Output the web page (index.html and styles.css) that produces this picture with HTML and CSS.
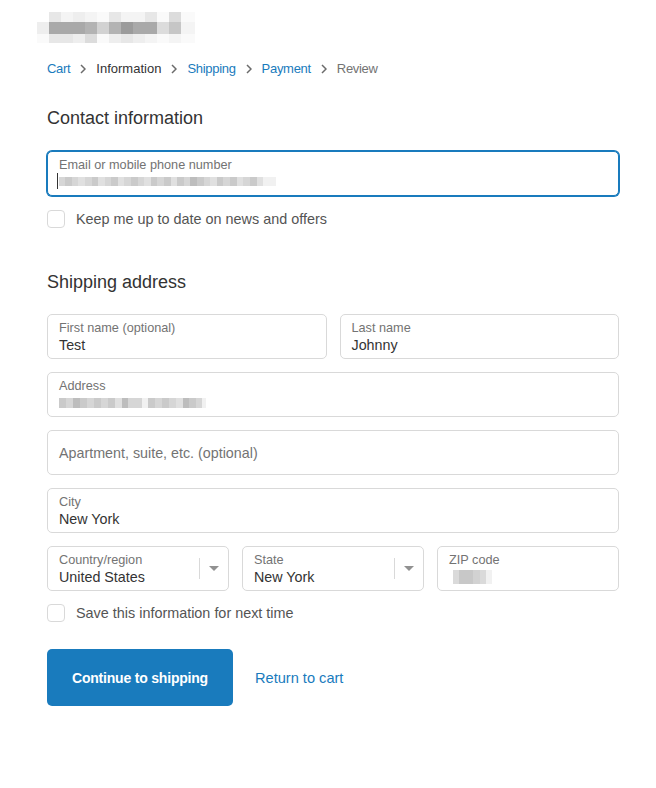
FILE: index.html
```html
<!DOCTYPE html>
<html lang="en">
<head>
<meta charset="utf-8">
<title>Information - Checkout</title>
<link rel="stylesheet" href="styles.css">
</head>
<body>
<main class="page">
  <div class="logo" aria-label="Store logo">
    <div class="pxrow r1">
      <i class="s0"></i><i class="s3"></i><i class="s1"></i><i class="s2"></i><i class="s1"></i><i class="s0b"></i><i class="s3"></i><i class="s1"></i><i class="s1"></i><i class="s3"></i><i class="s0b"></i><i class="s4"></i><i class="s0b"></i>
    </div>
    <div class="pxrow r2">
      <i class="s2"></i><i class="d2"></i><i class="d2"></i><i class="d2"></i><i class="d3"></i><i class="d5"></i><i class="d3"></i><i class="d1"></i><i class="d2"></i><i class="d2"></i><i class="s4"></i><i class="d4"></i><i class="s1"></i>
    </div>
    <div class="pxrow r3">
      <i class="s0b"></i><i class="s3"></i><i class="s3"></i><i class="s2"></i><i class="s4"></i><i class="s0b"></i><i class="s2"></i><i class="s3"></i><i class="s2"></i><i class="s1"></i><i class="s0b"></i><i class="s1"></i><i class="s0b"></i>
    </div>
  </div>

  <nav class="crumbs">
    <a class="crumb link">Cart</a>
    <svg class="chev" viewBox="0 0 6 10"><path d="M1 1l4 4-4 4"/></svg>
    <span class="crumb current">Information</span>
    <svg class="chev" viewBox="0 0 6 10"><path d="M1 1l4 4-4 4"/></svg>
    <a class="crumb link">Shipping</a>
    <svg class="chev" viewBox="0 0 6 10"><path d="M1 1l4 4-4 4"/></svg>
    <a class="crumb link">Payment</a>
    <svg class="chev" viewBox="0 0 6 10"><path d="M1 1l4 4-4 4"/></svg>
    <span class="crumb muted">Review</span>
  </nav>

  <h2 class="section-title">Contact information</h2>
  <div class="field focused">
    <span class="label">Email or mobile phone number</span>
    <span class="value blurred email-blur"><span class="caret"></span><i class="b1 w6"></i><i class="b2 w7"></i><i class="b1 w6"></i><i class="b3 w7"></i><i class="b1 w7"></i><i class="b2 w6"></i><i class="b3 w7"></i><i class="b1 w6"></i><i class="b2 w7"></i><i class="b3 w6"></i><i class="b1 w7"></i><i class="b2 w7"></i><i class="b1 w6"></i><i class="b3 w7"></i><i class="b2 w6"></i><i class="b1 w7"></i><i class="b2 w7"></i><i class="b3 w6"></i><i class="b2 w7"></i><i class="b1 w6"></i><i class="b4 w7"></i><i class="b2 w7"></i><i class="b1 w6"></i><i class="b3 w7"></i><i class="b2 w6"></i><i class="b1 w7"></i><i class="b2 w7"></i><i class="b3 w6"></i><i class="b1 w7"></i><i class="b2 w7"></i><i class="b3 w6"></i><i class="b5 w7"></i><i class="b5 w6"></i></span>
  </div>
  <label class="check">
    <span class="box"></span>
    <span class="check-text">Keep me up to date on news and offers</span>
  </label>

  <h2 class="section-title second">Shipping address</h2>
  <div class="fields">
    <div class="row two">
      <div class="field">
        <span class="label">First name (optional)</span>
        <span class="value">Test</span>
      </div>
      <div class="field">
        <span class="label">Last name</span>
        <span class="value">Johnny</span>
      </div>
    </div>
    <div class="field">
      <span class="label">Address</span>
      <span class="value blurred addr-blur"><i class="b2 w7"></i><i class="b1 w7"></i><i class="b4 w7"></i><i class="b2 w7"></i><i class="b1 w7"></i><i class="b2 w7"></i><i class="b1 w7"></i><i class="b2 w7"></i><i class="b3 w7"></i><i class="b4 w6"></i><i class="b1 w7"></i><i class="b1 w7"></i><i class="b5 w6"></i><i class="b2 w7"></i><i class="b1 w7"></i><i class="b2 w7"></i><i class="b1 w7"></i><i class="b3 w7"></i><i class="b4 w6"></i><i class="b2 w7"></i><i class="b1 w6"></i><i class="b5 w4"></i></span>
    </div>
    <div class="field placeholder-field">
      <span class="placeholder">Apartment, suite, etc. (optional)</span>
    </div>
    <div class="field">
      <span class="label">City</span>
      <span class="value">New York</span>
    </div>
    <div class="row three">
      <div class="field select">
        <div class="select-body">
          <span class="label">Country/region</span>
          <span class="value">United States</span>
        </div>
        <span class="select-arrow"><svg viewBox="0 0 10 6"><path d="M0 0h10L5 5z"/></svg></span>
      </div>
      <div class="field select">
        <div class="select-body">
          <span class="label">State</span>
          <span class="value">New York</span>
        </div>
        <span class="select-arrow"><svg viewBox="0 0 10 6"><path d="M0 0h10L5 5z"/></svg></span>
      </div>
      <div class="field">
        <span class="label">ZIP code</span>
        <span class="value blurred zip-blur"><i class="z1 w6"></i><i class="z2 w7"></i><i class="z2 w7"></i><i class="z3 w7"></i><i class="z1 w6"></i><i class="b5 w6"></i></span>
      </div>
    </div>
  </div>
  <label class="check check-save">
    <span class="box"></span>
    <span class="check-text">Save this information for next time</span>
  </label>

  <div class="actions">
    <button class="btn" type="button">Continue to shipping</button>
    <a class="link return">Return to cart</a>
  </div>
</main>
</body>
</html>
```

FILE: styles.css
```css
* { box-sizing: border-box; }
html, body { margin: 0; padding: 0; background: #ffffff; }
body {
  font-family: "Liberation Sans", Arial, Helvetica, sans-serif;
  color: #333333;
  -webkit-font-smoothing: antialiased;
}
.page {
  width: 572px;
  margin-left: 47px;
  padding-top: 12px;
  padding-bottom: 40px;
}

/* blurred logo */
.logo {
  margin-left: -10px;
  display: flex;
  flex-direction: column;
  width: 158px;
}
.pxrow { display: flex; }
.pxrow i { display: block; width: 12px; }
.pxrow i:last-child { width: 14px; }
.r1 i { height: 10px; }
.r2 i { height: 12px; }
.r3 i { height: 9px; }
.s0 { background: #ffffff; }
.s0b { background: #fafafa; }
.s1 { background: #f4f4f4; }
.s2 { background: #eeeeee; }
.s3 { background: #e7e7e7; }
.s4 { background: #dcdcdc; }
.d1 { background: #9b9b9b; }
.d2 { background: #a9a9a9; }
.d3 { background: #b3b3b3; }
.d4 { background: #c6c6c6; }
.d5 { background: #d2d2d2; }

/* breadcrumbs */
.crumbs {
  display: flex;
  align-items: center;
  gap: 10px;
  margin-top: 17px;
  height: 18px;
  font-size: 13px;
  line-height: 18px;
}
.crumb { white-space: nowrap; }
.crumb.link, .crumb.muted { letter-spacing: -0.3px; }
.link { color: #197bbd; text-decoration: none; cursor: pointer; }
.current { color: #333333; }
.muted { color: #737373; }
.chev {
  width: 6px;
  height: 10px;
  fill: none;
  stroke: #6b6b6b;
  stroke-width: 1.5;
}

/* headings */
.section-title {
  margin: 29px 0 0;
  font-size: 18px;
  line-height: 22px;
  font-weight: 400;
  color: #333333;
}
.section-title.second { margin-top: 43px; }
.section-title + .field { margin-top: 22px; }
.section-title + .fields { margin-top: 21px; }

/* fields */
.fields { display: flex; flex-direction: column; gap: 13px; }
.row { display: grid; gap: 13px; }
.row.two { grid-template-columns: 1fr 1fr; }
.row.three { grid-template-columns: 1fr 1fr 1fr; }

.field {
  position: relative;
  display: flex;
  flex-direction: column;
  height: 45px;
  padding: 5px 11px;
  border: 1px solid #d9d9d9;
  border-radius: 5px;
  background: #ffffff;
}
.field.focused {
  border-color: #197bbd;
  box-shadow: 0 0 0 1px #197bbd;
}
.label {
  font-size: 12.7px;
  line-height: 16px;
  color: #737373;
  white-space: nowrap;
}
.value {
  font-size: 14.3px;
  line-height: 19px;
  color: #333333;
  white-space: nowrap;
}
.placeholder-field { justify-content: center; }
.placeholder {
  font-size: 14.3px;
  line-height: 18px;
  color: #737373;
}

/* blurred values */
.blurred {
  display: flex;
  align-items: center;
  height: 19px;
}
.blurred i { display: block; height: 9px; }
.w4 { width: 4px; }
.w6 { width: 6px; }
.w7 { width: 7px; }
.b1 { background: #d6d6d6; }
.b2 { background: #cacaca; }
.b3 { background: #e0e0e0; }
.b4 { background: #bdbdbd; }
.b5 { background: #f1f1f1; }
.email-blur { margin-left: -2px; position: relative; }
.caret {
  display: block;
  width: 1px;
  height: 16px;
  background: #333333;
  margin-right: 1px;
  align-self: flex-start;
}
.addr-blur i { height: 10px; }
.zip-blur { margin-left: 4px; height: 20px; }
.zip-blur i { height: 14px; }
.z1 { background: #dadada; }
.z2 { background: #c8c8c8; }
.z3 { background: #d2d2d2; }

/* selects */
.select { flex-direction: row; padding-right: 0; }
.select-body { flex: 1; display: flex; flex-direction: column; min-width: 0; }
.select-arrow {
  width: 29px;
  margin: 6px 0;
  border-left: 1px solid #d9d9d9;
  display: flex;
  align-items: center;
  justify-content: center;
}
.select-arrow svg { width: 10px; height: 6px; fill: #919191; }

/* checkboxes */
.check {
  display: flex;
  align-items: center;
  gap: 11px;
  margin-top: 14px;
  cursor: pointer;
}
.check-save { margin-top: 13px; }
.box {
  width: 18px;
  height: 18px;
  border: 1px solid #d9d9d9;
  border-radius: 4px;
  background: #ffffff;
  flex: none;
}
.check-text {
  font-size: 14.4px;
  line-height: 18px;
  color: #545454;
}

/* actions */
.actions {
  display: flex;
  align-items: center;
  gap: 22px;
  margin-top: 27px;
}
.btn {
  height: 57px;
  width: 186px;
  padding: 0;
  border: none;
  border-radius: 5px;
  background: #197bbd;
  color: #ffffff;
  font-family: "Liberation Sans", Arial, Helvetica, sans-serif;
  font-size: 14px;
  font-weight: 700;
  letter-spacing: -0.2px;
  cursor: pointer;
}
.return { font-size: 14.6px; line-height: 18px; }
```
